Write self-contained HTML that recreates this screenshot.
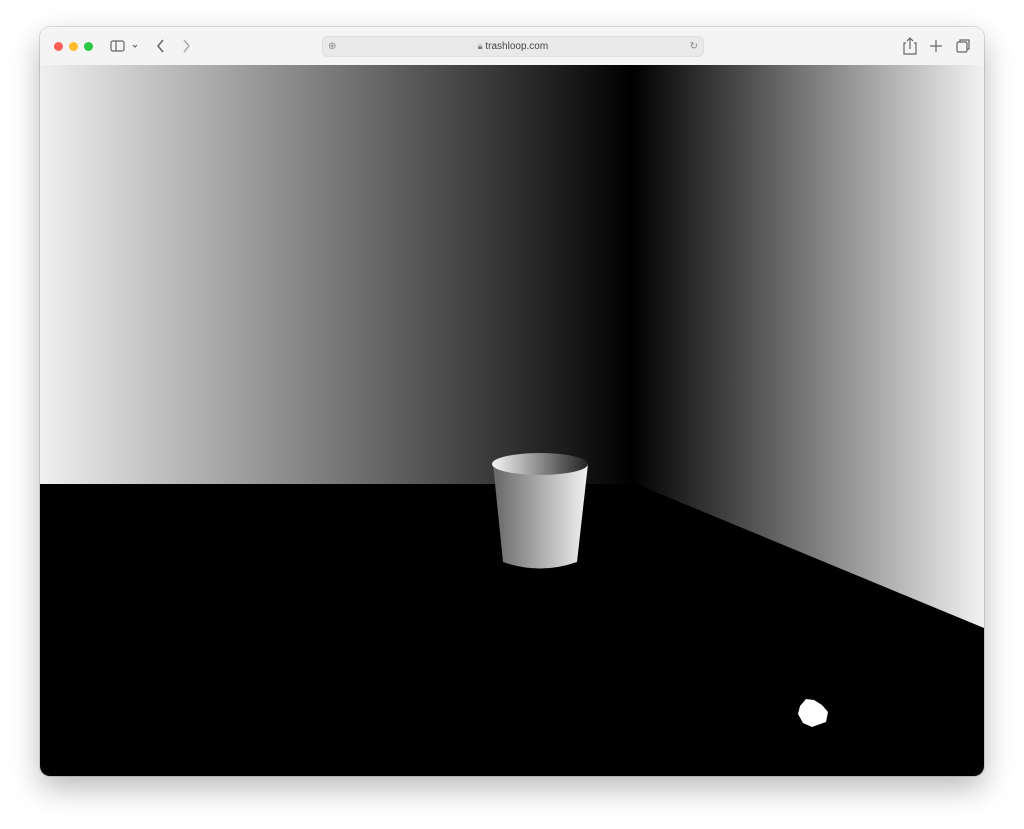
<!DOCTYPE html>
<html><head><meta charset="utf-8"><style>
html,body{margin:0;padding:0;width:1024px;height:829px;background:#fff;overflow:hidden;font-family:"Liberation Sans",sans-serif}
.win{position:absolute;left:40px;top:27px;width:944px;height:749px;border-radius:10px;overflow:hidden;box-shadow:0 12px 30px rgba(0,0,0,.28),0 0 0 1px rgba(0,0,0,.12)}
.bar{position:absolute;left:0;top:0;width:944px;height:38px;background:#f4f4f4;border-bottom:1px solid #dcdcdc}
.dot{position:absolute;top:15px;width:9px;height:9px;border-radius:50%}
.url{position:absolute;left:282px;top:9px;width:380px;height:19px;background:#e9e9e9;border-radius:6px;border:1px solid #dedede;font-size:10px;color:#444;text-align:center;line-height:19px}
svg{position:absolute}
</style></head><body>
<div class="win">
<div class="bar">
<div class="dot" style="left:14px;background:#fe5f57"></div>
<div class="dot" style="left:29px;background:#febc2e"></div>
<div class="dot" style="left:44px;background:#28c840"></div>
<svg style="left:68px;top:10px" width="110" height="18" viewBox="0 0 110 18" fill="none" stroke="#666" stroke-width="1.2">
<rect x="3" y="4" width="13" height="10" rx="2"/><line x1="8" y1="4" x2="8" y2="14"/>
<path d="M25 8l2 2 2-2"/>
<path d="M55 3l-5 6 5 6" stroke-width="1.5"/>
<path d="M76 3l5 6-5 6" stroke="#aaa" stroke-width="1.5"/>
</svg>
<div class="url"><span style="position:absolute;left:5px;top:0;color:#888">⊕</span><span style="font-size:9px;color:#777">🔒︎</span> trashloop.com<span style="position:absolute;right:5px;top:0;color:#888">↻</span></div>
<svg style="left:860px;top:9px" width="80" height="20" viewBox="0 0 80 20" fill="none" stroke="#666" stroke-width="1.2">
<path d="M6 7H4v11h12V7h-2M10 2v11M7 5l3-3 3 3"/>
<path d="M36 4v12M30 10h12"/>
<rect x="57" y="6" width="10" height="10" rx="1.5"/><path d="M60 6V4h9v9h-2"/>
</svg>
</div>
<svg style="left:0;top:38px" width="944" height="711" viewBox="0 38 944 711">
<defs>
<linearGradient id="bw" x1="0" x2="1"><stop offset="0" stop-color="#f0f0f0"/><stop offset="1" stop-color="#000"/></linearGradient>
<linearGradient id="rw" x1="0" x2="1"><stop offset="0" stop-color="#000"/><stop offset="1" stop-color="#f2f2f2"/></linearGradient>
<linearGradient id="cup" x1="0" x2="1"><stop offset="0" stop-color="#666"/><stop offset="1" stop-color="#f2f2f2"/></linearGradient>
<linearGradient id="in" x1="0" x2="1"><stop offset="0" stop-color="#f4f4f4"/><stop offset="1" stop-color="#222"/></linearGradient>
</defs>
<rect x="0" y="38" width="592" height="420" fill="url(#bw)"/>
<rect x="592" y="38" width="352" height="600" fill="url(#rw)"/>
<polygon points="0,457 596,457 944,601 944,749 0,749" fill="#000"/>
<path d="M453 437 L463 535 Q500 548 537 535 L548 437 Z" fill="url(#cup)"/>
<ellipse cx="500" cy="437" rx="48" ry="11" fill="url(#in)"/>
<polygon points="760,679 766,672 774,673 782,678 788,685 786,695 772,700 763,696 758,687" fill="#fff"/>
</svg>
</div>
</body></html>
